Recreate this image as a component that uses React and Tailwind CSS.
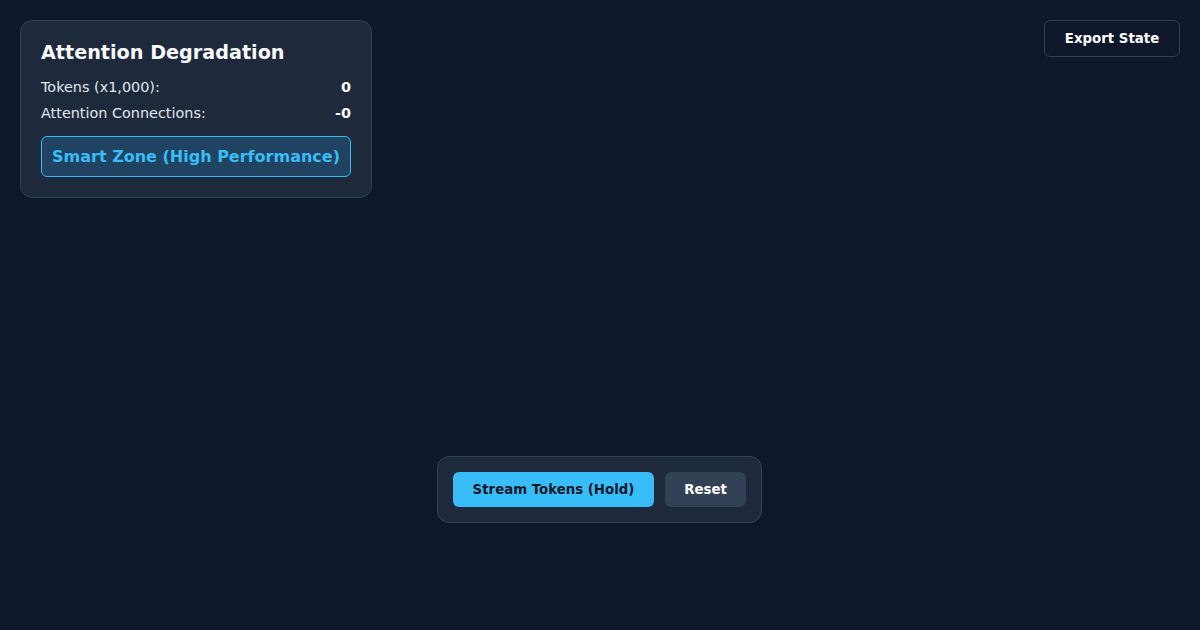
export default function App() {
  return (
    <div
      className="relative w-[1200px] h-[630px] overflow-hidden bg-[#0f172a] text-white"
      style={{ fontFamily: '"DejaVu Sans", sans-serif' }}
    >
      <div className="absolute left-5 top-5 w-[352px] rounded-xl border border-[#334155] bg-[#1e293b] p-5">
        <h1 className="text-[19.2px] font-bold leading-6 mb-3 text-[#f8fafc]">Attention Degradation</h1>
        <div className="flex justify-between text-[14.4px] leading-5 text-[#e2e8f0]">
          <span>Tokens (x1,000):</span>
          <span className="font-bold text-white">0</span>
        </div>
        <div className="flex justify-between text-[14.4px] leading-5 mt-[6px] text-[#e2e8f0]">
          <span>Attention Connections:</span>
          <span className="font-bold text-white">-0</span>
        </div>
        <div className="mt-[13px] h-[41px] flex items-center justify-center rounded-md border border-[#38bdf8] bg-[#1f4361] text-base font-bold text-[#38bdf8]">
          Smart Zone (High Performance)
        </div>
      </div>

      <button className="absolute right-5 top-5 h-[37px] w-[136px] pt-px rounded-md border border-[#334155] bg-[#0f172a] text-[13.33px] font-bold text-white">
        Export State
      </button>

      <div className="absolute left-[437px] top-[456px] flex gap-[11px] rounded-xl border border-[#334155] bg-[#1e293b] p-[15px]">
        <button className="h-[35px] w-[201px] rounded-md bg-[#38bdf8] text-[13.33px] font-bold text-[#0f172a]">
          Stream Tokens (Hold)
        </button>
        <button className="h-[35px] w-[81px] rounded-md bg-[#334155] text-[13.33px] font-bold text-white">
          Reset
        </button>
      </div>
    </div>
  );
}
